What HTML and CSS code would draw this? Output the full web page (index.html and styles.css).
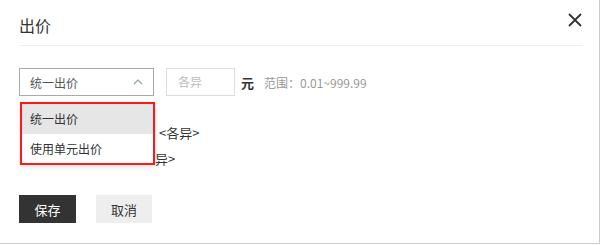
FILE: index.html
```html
<!DOCTYPE html>
<html lang="zh-CN">
<head>
<meta charset="utf-8">
<link rel="stylesheet" href="styles.css">
</head>
<body>
<div class="modal">
  <div class="header">
    <div class="title">出价</div>
    <div class="close">
      <svg width="14" height="14" viewBox="0 0 14 14"><path d="M1 1L13 13M13 1L1 13" stroke="#333" stroke-width="1.8" fill="none"/></svg>
    </div>
  </div>
  <div class="field-row">
    <div class="select">
      <span class="select-text">统一出价</span>
      <svg class="chev" width="10" height="6" viewBox="0 0 10 6"><path d="M1 5L5 1L9 5" stroke="#8f9cb0" stroke-width="1.2" fill="none"/></svg>
      <div class="dropdown">
        <div class="option active">统一出价</div>
        <div class="option">使用单元出价</div>
      </div>
    </div>
    <div class="input">各异</div>
    <span class="unit">元</span>
    <span class="range">范围：0.01~999.99</span>
  </div>
  <div class="info-row first">
    <span class="info-label wide"></span>
    <span class="info-value">&lt;各异&gt;</span>
  </div>
  <div class="info-row">
    <span class="info-label narrow"></span>
    <span class="info-value clip">异&gt;</span>
  </div>
  <div class="actions">
    <button class="btn primary">保存</button>
    <button class="btn secondary">取消</button>
  </div>
</div>
</body>
</html>
```
FILE: styles.css
```css
html, body {
  margin: 0;
  padding: 0;
  background: #fff;
}
body {
  font-family: "Noto Sans CJK SC", "Noto Sans", sans-serif;
  color: #333;
}
.modal {
  width: 600px;
  height: 244px;
  box-sizing: border-box;
  border-right: 1px solid #cccccc;
  border-bottom: 1px solid #cccccc;
  padding: 0 16px 0 19px;
}
.header {
  height: 46px;
  box-sizing: border-box;
  border-bottom: 1px solid #eeeeee;
  display: flex;
  justify-content: space-between;
  align-items: flex-start;
}
.title {
  font-size: 16px;
  line-height: 18px;
  padding-top: 16px;
  color: #333;
}
.close {
  padding-top: 13px;
  padding-right: 1px;
  line-height: 0;
}
.field-row {
  display: flex;
  align-items: center;
  margin-top: 22px;
  height: 28px;
}
.select {
  position: relative;
  width: 135px;
  height: 28px;
  box-sizing: border-box;
  border: 1px solid #a9a9a9;
  display: flex;
  align-items: center;
  justify-content: space-between;
  padding: 0 10px 0 10px;
}
.select-text {
  font-size: 12px;
  color: #555;
}
.chev {
  display: block;
  margin-top: -1px;
}
.dropdown {
  position: absolute;
  top: 33px;
  left: 0;
  width: 135px;
  height: 63px;
  box-sizing: border-box;
  border: 2px solid #ff1a1a;
  background: #fff;
  box-shadow: 0 2px 5px rgba(0, 0, 0, 0.12);
  z-index: 2;
}
.option {
  height: 29.5px;
  line-height: 29.5px;
  padding-left: 8px;
  font-size: 12px;
  color: #333;
}
.option.active {
  background: #e6e6e6;
}
.input {
  margin-left: 12px;
  width: 69px;
  height: 28px;
  box-sizing: border-box;
  border: 1px solid #dddddd;
  font-size: 12px;
  color: #bbb;
  line-height: 26px;
  padding-left: 11px;
}
.unit {
  margin-left: 6px;
  font-size: 13px;
  font-weight: bold;
  color: #333;
}
.range {
  margin-left: 10px;
  font-size: 12px;
  color: #999;
}
.info-row {
  display: flex;
  height: 26px;
  align-items: center;
  font-size: 13px;
  color: #333;
}
.info-row.first {
  margin-top: 23px;
}
.info-label {
  display: block;
  flex: none;
}
.info-label.wide {
  width: 140px;
}
.info-label.narrow {
  width: 136px;
}
.actions {
  display: flex;
  gap: 20px;
  margin-top: 24px;
}
.btn {
  height: 28px;
  border: none;
  margin: 0;
  padding: 0;
  font-family: "Noto Sans CJK SC", "Noto Sans", sans-serif;
  font-size: 13px;
  cursor: pointer;
}
.btn.primary {
  width: 57px;
  background: #333;
  color: #fff;
}
.btn.secondary {
  width: 56px;
  background: #eeeeee;
  color: #333;
}
```
